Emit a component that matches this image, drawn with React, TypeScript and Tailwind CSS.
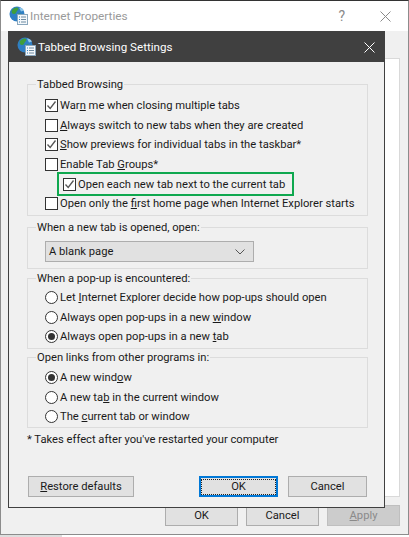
import type { ReactNode } from "react"

const Globe = () => (
  <svg width="20" height="20" viewBox="0 0 20 20" className="shrink-0">
    <circle cx="8" cy="8" r="7.5" fill="#2f7fc4" />
    <path d="M3 4c2-2 4-3 6-2 1 1 0 2-1 3s-1 3-3 3-3-2-2-4zM9 8c2-1 4 0 5 2-1 2-3 4-4 4-1-2-2-4-1-6z" fill="#3f9e3a" />
    <path d="M10 1.5c2 0 4 1 5 3l-3 1z" fill="#8fc7ea" />
    <rect x="8.5" y="8.5" width="10" height="10" fill="#f4f8fb" stroke="#8aa7bd" />
    <path d="M10 11h1M10 13.5h1M10 16h1" stroke="#2f7fc4" strokeWidth="1.2" />
    <path d="M12 11h5M12 13.5h5M12 16h5" stroke="#6d8aa0" />
  </svg>
)

const Check = ({ checked }: { checked?: boolean }) => (
  <span className="w-[13px] h-[13px] border border-[#333333] bg-white shrink-0 flex items-center justify-center">
    {checked && (
      <svg width="11" height="11" viewBox="0 0 11 11">
        <path d="M1.5 5.5 4.2 8.5 9.5 1.5" fill="none" stroke="#555555" strokeWidth="1.3" />
      </svg>
    )}
  </span>
)

const Radio = ({ checked }: { checked?: boolean }) => (
  <span className="w-[13px] h-[13px] rounded-full border border-[#333333] bg-white shrink-0 flex items-center justify-center">
    {checked && <span className="w-[7px] h-[7px] rounded-full bg-[#333333]" />}
  </span>
)

const Row = ({ mark, children, className = "h-[19.5px]" }: { mark: ReactNode; children: ReactNode; className?: string }) => (
  <div className={"flex items-center gap-[2px] whitespace-nowrap " + className}>
    {mark}
    <span className="pt-[2px]">{children}</span>
  </div>
)

const Group = ({ title, className, children }: { title: string; className: string; children: ReactNode }) => (
  <div className={"relative border border-[#dcdcdc] pl-[17px] " + className}>
    <span className="absolute -top-[8px] left-[8px] px-[1px] bg-[#f0f0f0] leading-[16px] whitespace-nowrap">{title}</span>
    {children}
  </div>
)

const Btn = ({ children, className }: { children: ReactNode; className: string }) => (
  <div className={"h-[21px] flex items-center justify-center border pt-[1px] " + className}>{children}</div>
)

export default function App() {
  return (
    <div className="relative w-[409px] h-[537px] overflow-hidden bg-white font-['Roboto',sans-serif] text-[11.2px] text-[#1a1a1a]">
      {/* back window */}
      <div className="h-[535px] border-x border-b border-t border-[#8c8c8c] border-t-[#333333] flex flex-col bg-[#f0f0f0]">
        <div className="h-[30px] bg-white flex items-center pl-[8px] pr-[17px] shrink-0">
          <Globe />
          <span className="ml-[1px] pt-[1px] text-[#9a9a9a] text-[11.8px]">Internet Properties</span>
          <span className="ml-auto text-[#8a8a8a] text-[14px]">?</span>
          <svg width="11" height="11" viewBox="0 0 11 11" className="ml-[35px]">
            <path d="M.5.5l10 10M10.5.5l-10 10" stroke="#8a8a8a" />
          </svg>
        </div>
        <div className="flex-1 flex flex-col pr-[8px]">
          <div className="relative flex-1 bg-white border border-[#d9d9d9] mt-[27px] ml-[370px]">
            <div className="absolute -top-[18px] -left-[1px] w-[8px] h-[18px] bg-white border-t border-r border-[#d9d9d9] text-[12px] leading-[18px] overflow-hidden">
              <span className="block -ml-[1px]">d</span>
            </div>
          </div>
          <div className="flex justify-end gap-[8px] pt-[8px] pb-[8px]">
            <Btn className="w-[73px] border-[#adadad] bg-[#e1e1e1]">OK</Btn>
            <Btn className="w-[73px] border-[#adadad] bg-[#e1e1e1]">Cancel</Btn>
            <Btn className="w-[73px] bg-[#cccccc] border-[#bfbfbf] text-[#8a8a8a]">
              <span><span className="underline">A</span>pply</span>
            </Btn>
          </div>
        </div>
      </div>
      <div className="h-[2px] w-[62px] bg-[#dedede]" />

      {/* settings dialog */}
      <div className="absolute left-[8px] top-[31px] w-[377px] h-[477px] border border-[#404040] bg-[#f0f0f0] flex flex-col">
        <div className="h-[30px] bg-[#404040] text-white flex items-center pl-[8px] pr-[9px] shrink-0">
          <Globe />
          <span className="ml-[1px] pt-[1px] text-[11.6px]">Tabbed Browsing Settings</span>
          <svg width="11" height="11" viewBox="0 0 11 11" className="ml-auto">
            <path d="M.5.5l10 10M10.5.5l-10 10" stroke="#ffffff" />
          </svg>
        </div>
        <div className="flex-1 flex flex-col pl-[18px] pr-[16px] pt-[22px]">
          <Group title="Tabbed Browsing" className="h-[132px] pt-[11px]">
            <Row mark={<Check checked />}>War<span className="underline">n</span> me when closing multiple tabs</Row>
            <Row mark={<Check />}><span className="underline">A</span>lways switch to new tabs when they are created</Row>
            <Row mark={<Check checked />}><span className="underline">S</span>how previews for individual tabs in the taskbar*</Row>
            <Row mark={<Check />}>Enable Tab <span className="underline">G</span>roups*</Row>
            <Row mark={<Check checked />} className="ml-[12px] pl-[4px] w-[237px] h-[24px] -my-[2px] border-[2px] border-[#0fa84f]">
              Open each new tab next to the current tab
            </Row>
            <Row mark={<Check />}>Open only the <span className="underline">f</span>irst home page when Internet Explorer starts</Row>
          </Group>

          <Group title="When a new tab is opened, open:" className="h-[42px] mt-[11px] pt-[13px]">
            <div className="w-[209px] h-[21px] border border-[#adadad] bg-[#e1e1e1] flex items-center pl-[3px] pr-[8px]">
              <span className="pt-[1px]">A blank page</span>
              <svg width="10" height="6" viewBox="0 0 10 6" className="ml-auto">
                <path d="M.5.5 5 5 9.5.5" fill="none" stroke="#555555" />
              </svg>
            </div>
          </Group>

          <Group title="When a pop-up is encountered:" className="h-[71px] mt-[9px] pt-[9px]">
            <Row mark={<Radio />}>Let <span className="underline">I</span>nternet Explorer decide how pop-ups should open</Row>
            <Row mark={<Radio />}>Always open pop-ups in a new <span className="underline">w</span>indow</Row>
            <Row mark={<Radio checked />}>Always open pop-ups in a new <span className="underline">t</span>ab</Row>
          </Group>

          <Group title="Open links from other programs in:" className="h-[71px] mt-[8px] pt-[10px]">
            <Row mark={<Radio checked />}>A new wind<span className="underline">o</span>w</Row>
            <Row mark={<Radio />}>A new ta<span className="underline">b</span> in the current window</Row>
            <Row mark={<Radio />}>The <span className="underline">c</span>urrent tab or window</Row>
          </Group>

          <div className="mt-[4px] leading-[16px]">* Takes effect after you've restarted your computer</div>

          <div className="mt-[28px] flex">
            <Btn className="w-[106px] ml-[1px] border-[#adadad] bg-[#e1e1e1]"><span><span className="underline">R</span>estore defaults</span></Btn>
            <Btn className="w-[79px] ml-[65px] border-[2px] border-[#0078d7] bg-[#e1e1e1] pt-0">
              <span className="border border-dotted border-[#222222] w-full h-full flex items-center justify-center">OK</span>
            </Btn>
            <Btn className="w-[79px] ml-[10px] border-[#adadad] bg-[#e1e1e1]">Cancel</Btn>
          </div>
        </div>
      </div>
    </div>
  )
}
